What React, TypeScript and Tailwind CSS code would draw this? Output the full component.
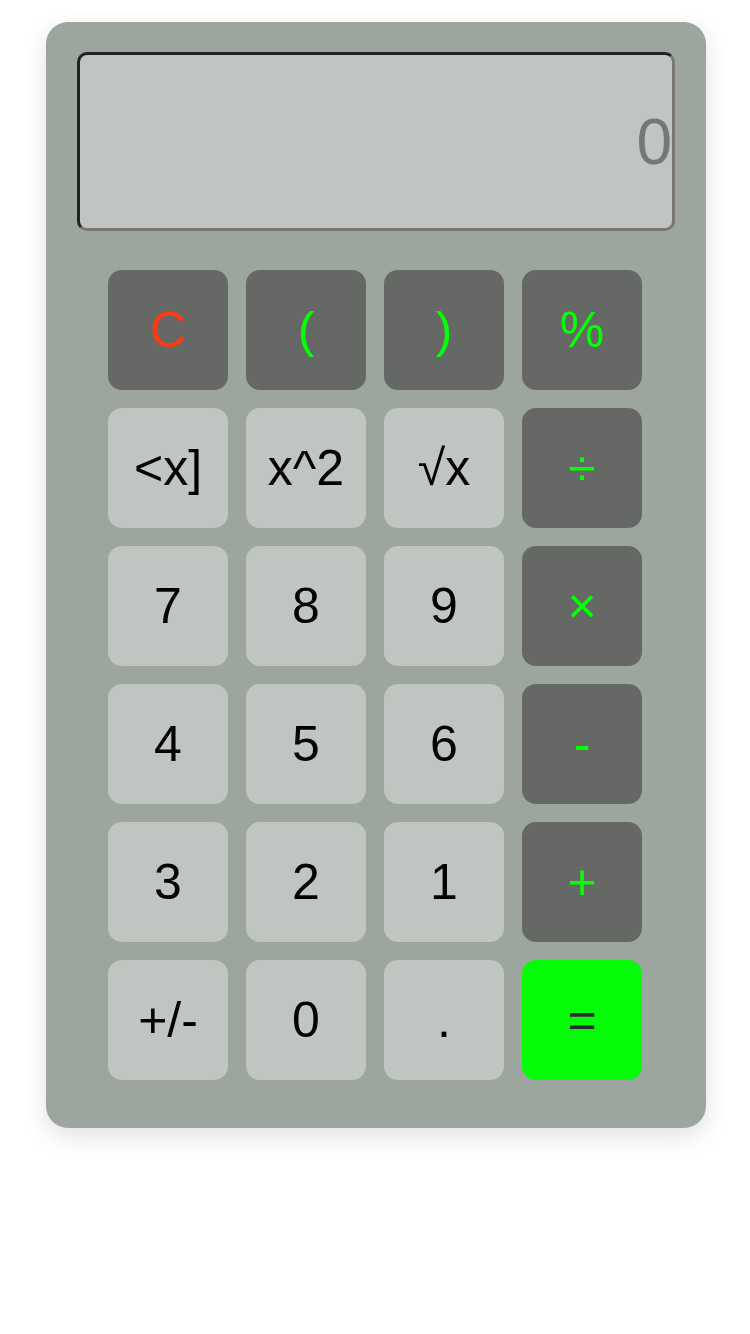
import React from "react";

type Btn = { label: string; kind: "dark" | "light" | "eq"; color?: string };

const rows: Btn[][] = [
  [
    { label: "C", kind: "dark", color: "text-[#ff3a12]" },
    { label: "(", kind: "dark", color: "text-[#05ff05]" },
    { label: ")", kind: "dark", color: "text-[#05ff05]" },
    { label: "%", kind: "dark", color: "text-[#05ff05]" },
  ],
  [
    { label: "<x]", kind: "light" },
    { label: "x^2", kind: "light" },
    { label: "√x", kind: "light" },
    { label: "÷", kind: "dark", color: "text-[#05ff05]" },
  ],
  [
    { label: "7", kind: "light" },
    { label: "8", kind: "light" },
    { label: "9", kind: "light" },
    { label: "×", kind: "dark", color: "text-[#05ff05]" },
  ],
  [
    { label: "4", kind: "light" },
    { label: "5", kind: "light" },
    { label: "6", kind: "light" },
    { label: "-", kind: "dark", color: "text-[#05ff05]" },
  ],
  [
    { label: "3", kind: "light" },
    { label: "2", kind: "light" },
    { label: "1", kind: "light" },
    { label: "+", kind: "dark", color: "text-[#05ff05]" },
  ],
  [
    { label: "+/-", kind: "light" },
    { label: "0", kind: "light" },
    { label: ".", kind: "light" },
    { label: "=", kind: "eq" },
  ],
];

function Key({ b }: { b: Btn }) {
  const base =
    "w-[120px] h-[120px] rounded-[14px] flex items-center justify-center text-[50px] leading-none";
  if (b.kind === "dark")
    return <div className={`${base} bg-[#666866] ${b.color}`}>{b.label}</div>;
  if (b.kind === "eq")
    return <div className={`${base} bg-[#05fc09] text-[#2b2b2b]`}>{b.label}</div>;
  return <div className={`${base} bg-[#c1c5c1] text-black`}>{b.label}</div>;
}

export default function App() {
  return (
    <div
      className="w-[750px] h-[1334px] bg-white pt-[22px] pl-[46px]"
      style={{ fontFamily: '"Liberation Sans", Arial, sans-serif' }}
    >
      <div className="w-[660px] h-[1106px] bg-[#9ca59e] rounded-[22px] shadow-[0_8px_24px_rgba(0,0,0,0.12)] pt-[30px] px-[31px] flex flex-col">
        <div className="w-[598px] h-[179px] rounded-[10px] border-[3px] border-t-[#222222] border-l-[#222222] border-b-[#777777] border-r-[#777777] bg-[#c0c5c1] flex items-center justify-end">
          <span className="text-[64px] leading-none text-[#777777]">0</span>
        </div>
        <div className="mt-[39px] flex flex-col gap-[18px] pl-[31px]">
          {rows.map((r, i) => (
            <div key={i} className="flex gap-[18px]">
              {r.map((b, j) => (
                <Key key={j} b={b} />
              ))}
            </div>
          ))}
        </div>
      </div>
    </div>
  );
}
